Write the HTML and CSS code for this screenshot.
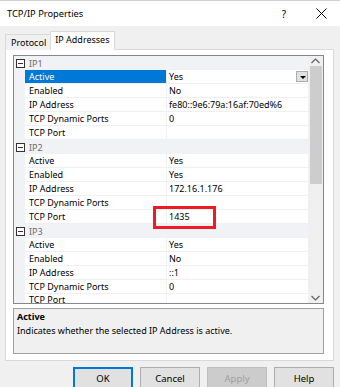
FILE: index.html
```html
<!DOCTYPE html>
<html lang="en">
<head>
  <meta charset="UTF-8">
  <title>TCP/IP Properties</title>
  <link rel="stylesheet" href="styles.css">
</head>
<body>
  <div class="titlebar">
    <span class="title">TCP/IP Properties</span>
    <span class="help-btn">?</span>
    <span class="close-btn">
      <svg width="11" height="11" viewBox="0 0 11 11"><path d="M0.5 0.5 L10.5 10.5 M10.5 0.5 L0.5 10.5" stroke="#000" stroke-width="1" fill="none"/></svg>
    </span>
  </div>

  <div class="tabs">
    <div class="tab">Protocol</div>
    <div class="tab active">IP Addresses</div>
  </div>

  <div class="panel">
    <div class="grid">
      <div class="rows">
        <div class="row category"><span class="toggle"></span><span class="cat-name">IP1</span></div>
        <div class="row selected"><span class="gutter"></span><span class="name">Active</span><span class="value">Yes<span class="drop"></span></span></div>
        <div class="row"><span class="gutter"></span><span class="name">Enabled</span><span class="value">No</span></div>
        <div class="row"><span class="gutter"></span><span class="name">IP Address</span><span class="value">fe80::9e6:79a:16af:70ed%6</span></div>
        <div class="row"><span class="gutter"></span><span class="name">TCP Dynamic Ports</span><span class="value">0</span></div>
        <div class="row"><span class="gutter"></span><span class="name">TCP Port</span><span class="value"></span></div>

        <div class="row category"><span class="toggle"></span><span class="cat-name">IP2</span></div>
        <div class="row"><span class="gutter"></span><span class="name">Active</span><span class="value">Yes</span></div>
        <div class="row"><span class="gutter"></span><span class="name">Enabled</span><span class="value">Yes</span></div>
        <div class="row"><span class="gutter"></span><span class="name">IP Address</span><span class="value">172.16.1.176</span></div>
        <div class="row"><span class="gutter"></span><span class="name">TCP Dynamic Ports</span><span class="value"></span></div>
        <div class="row"><span class="gutter"></span><span class="name">TCP Port</span><span class="value">1435<span class="marker"></span></span></div>

        <div class="row category"><span class="toggle"></span><span class="cat-name">IP3</span></div>
        <div class="row"><span class="gutter"></span><span class="name">Active</span><span class="value">Yes</span></div>
        <div class="row"><span class="gutter"></span><span class="name">Enabled</span><span class="value">No</span></div>
        <div class="row"><span class="gutter"></span><span class="name">IP Address</span><span class="value">::1</span></div>
        <div class="row"><span class="gutter"></span><span class="name">TCP Dynamic Ports</span><span class="value">0</span></div>
        <div class="row last"><span class="gutter"></span><span class="name">TCP Port</span><span class="value"></span></div>
      </div>
      <div class="scrollbar">
        <div class="arrow">
          <svg width="9" height="6" viewBox="0 0 9 6"><path d="M0.5 5 L4.5 1 L8.5 5" stroke="#606060" stroke-width="1.2" fill="none"/></svg>
        </div>
        <div class="track"><div class="thumb"></div></div>
        <div class="arrow">
          <svg width="9" height="6" viewBox="0 0 9 6"><path d="M0.5 1 L4.5 5 L8.5 1" stroke="#606060" stroke-width="1.2" fill="none"/></svg>
        </div>
      </div>
    </div>

    <div class="description">
      <div class="desc-title">Active</div>
      <div class="desc-text">Indicates whether the selected IP Address is active.</div>
    </div>
  </div>

  <div class="buttons">
    <button class="btn default">OK</button>
    <button class="btn">Cancel</button>
    <button class="btn" disabled>Apply</button>
    <button class="btn">Help</button>
  </div>
</body>
</html>
```

FILE: styles.css
```css
body {
  margin: 0;
  width: 340px;
  height: 387px;
  overflow: hidden;
  background: #f0f0f0;
  font-family: "Noto Sans", Arial, sans-serif;
  font-size: 9px;
  color: #000;
}

.titlebar {
  height: 26px;
  background: #fff;
  display: flex;
  align-items: center;
  padding-left: 7px;
  box-sizing: border-box;
  border-top: 1px solid #cfcfcf;
}

.title {
  font-size: 9.3px;
  flex: 1;
}

.help-btn {
  font-size: 10px;
  width: 36px;
  text-align: center;
}

.close-btn {
  width: 38px;
  display: flex;
  justify-content: center;
}

.tabs {
  display: flex;
  align-items: flex-end;
  padding-left: 5px;
  height: 23px;
}

.tab {
  height: 15px;
  line-height: 15px;
  padding: 0 4px 0 5px;
  border: 1px solid #d9d9d9;
  border-bottom: none;
  background: #f0f0f0;
  position: relative;
  top: 1px;
}

.tab.active {
  height: 18px;
  line-height: 16px;
  background: #fff;
  padding: 0 4px;
  margin-left: -1px;
  z-index: 1;
}

.panel {
  margin: 0 6px 0 5px;
  background: #fff;
  border: 1px solid #d9d9d9;
  height: 312px;
  box-sizing: border-box;
  padding: 5px 9px 0 7px;
}

.grid {
  display: flex;
  height: 249px;
  border: 1px solid #828790;
  box-sizing: border-box;
  overflow: hidden;
}

.rows {
  flex: 1;
}

.row {
  display: flex;
  height: 14px;
  line-height: 13px;
  box-sizing: border-box;
}

.gutter {
  width: 11px;
  background: #f0f2f5;
  flex: none;
}

.name {
  width: 142px;
  flex: none;
  padding-left: 4px;
  box-sizing: border-box;
  border-bottom: 1px solid #f0f0f0;
  border-right: 1px solid #f0f0f0;
  white-space: nowrap;
}

.value {
  flex: 1;
  padding-left: 2px;
  border-bottom: 1px solid #f0f0f0;
  display: flex;
  position: relative;
  white-space: nowrap;
}

.row.last {
  line-height: 11px;
}

.row.category {
  background: #f0f2f5;
  align-items: center;
}

.toggle {
  width: 7px;
  height: 7px;
  border: 1px solid #333;
  margin-left: 2px;
  position: relative;
  background: #fff;
}

.toggle::after {
  content: "";
  position: absolute;
  left: 1px;
  top: 3px;
  width: 5px;
  height: 1px;
  background: #333;
}

.cat-name {
  color: #6d6d6d;
  padding-left: 4px;
}

.row.selected .name {
  background: #0078d7;
  color: #fff;
}

.drop {
  margin-left: auto;
  width: 12px;
  height: 11px;
  margin-top: 1px;
  background: #e1e1e1;
  border: 1px solid #adadad;
  box-sizing: border-box;
  position: relative;
}

.drop::after {
  content: "";
  position: absolute;
  left: 3px;
  top: 4px;
  border-left: 3px solid transparent;
  border-right: 3px solid transparent;
  border-top: 3px solid #000;
}

.marker {
  position: absolute;
  left: -14px;
  top: -4px;
  width: 63px;
  height: 23px;
  border: 3px solid #ed1c24;
  box-sizing: border-box;
}

.scrollbar {
  width: 15px;
  flex: none;
  background: #f0f0f0;
  display: flex;
  flex-direction: column;
}

.arrow {
  height: 10px;
  display: flex;
  align-items: center;
  justify-content: center;
}

.track {
  flex: 1;
  padding: 0 1px 0 2px;
}

.thumb {
  height: 118px;
  background: #cdcdcd;
}

.description {
  margin-top: 4px;
  height: 46px;
  border: 1px solid #a0a0a0;
  background: #f0f0f0;
  box-sizing: border-box;
  padding: 1px 3px;
  line-height: 14px;
}

.desc-title {
  font-weight: bold;
}

.buttons {
  display: flex;
  justify-content: flex-end;
  gap: 7px;
  padding-right: 6px;
  margin-top: 6px;
}

.btn {
  width: 60px;
  height: 23px;
  font-family: "Noto Sans", Arial, sans-serif;
  font-size: 9.5px;
  background: #e1e1e1;
  border: 1px solid #adadad;
  color: #000;
  padding: 0;
}

.btn.default {
  border: 2px solid #0078d7;
}

.btn:disabled {
  background: #cccccc;
  border-color: #bfbfbf;
  color: #a0a0a0;
}
```
